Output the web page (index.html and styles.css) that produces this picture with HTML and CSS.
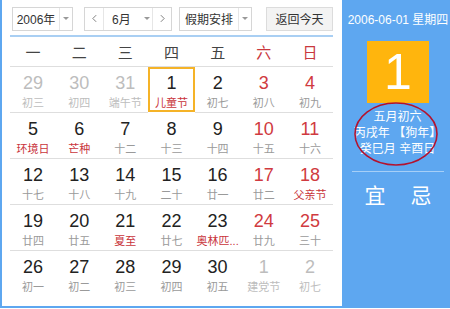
FILE: index.html
```html
<!DOCTYPE html>
<html lang="zh-CN">
<head>
    <meta charset="UTF-8">
    <title>万年历</title>
    <link rel="stylesheet" href="styles.css">
</head>
<body>
    <div class="calendar">
        <div class="main">
            <div class="toolbar">
                <div class="select year">
                    <span class="value">2006年</span>
                    <span class="drop"><i class="caret"></i></span>
                </div>
                <div class="select month">
                    <span class="nav">
                        <svg viewBox="0 0 6 10"><path d="M5 1 1 5l4 4"/></svg>
                    </span>
                    <span class="value">6月<i class="caret"></i></span>
                    <span class="nav">
                        <svg viewBox="0 0 6 10"><path d="M1 1l4 4-4 4"/></svg>
                    </span>
                </div>
                <div class="select holiday">
                    <span class="value">假期安排</span>
                    <span class="drop"><i class="caret"></i></span>
                </div>
                <button class="today-btn">返回今天</button>
            </div>

            <div class="weekdays">
                <span>一</span><span>二</span><span>三</span><span>四</span><span>五</span>
                <span class="weekend">六</span><span class="weekend">日</span>
            </div>

            <div class="days">
                <!-- week 1 -->
                <div class="day other"><b>29</b><small>初三</small></div>
                <div class="day other"><b>30</b><small>初四</small></div>
                <div class="day other"><b>31</b><small>端午节</small></div>
                <div class="day selected"><b>1</b><small class="fest">儿童节</small></div>
                <div class="day"><b>2</b><small>初七</small></div>
                <div class="day weekend"><b>3</b><small>初八</small></div>
                <div class="day weekend"><b>4</b><small>初九</small></div>
                <!-- week 2 -->
                <div class="day"><b>5</b><small class="fest">环境日</small></div>
                <div class="day"><b>6</b><small class="fest">芒种</small></div>
                <div class="day"><b>7</b><small>十二</small></div>
                <div class="day"><b>8</b><small>十三</small></div>
                <div class="day"><b>9</b><small>十四</small></div>
                <div class="day weekend"><b>10</b><small>十五</small></div>
                <div class="day weekend"><b>11</b><small>十六</small></div>
                <!-- week 3 -->
                <div class="day"><b>12</b><small>十七</small></div>
                <div class="day"><b>13</b><small>十八</small></div>
                <div class="day"><b>14</b><small>十九</small></div>
                <div class="day"><b>15</b><small>二十</small></div>
                <div class="day"><b>16</b><small>廿一</small></div>
                <div class="day weekend"><b>17</b><small>廿二</small></div>
                <div class="day weekend"><b>18</b><small class="fest">父亲节</small></div>
                <!-- week 4 -->
                <div class="day"><b>19</b><small>廿四</small></div>
                <div class="day"><b>20</b><small>廿五</small></div>
                <div class="day"><b>21</b><small class="fest">夏至</small></div>
                <div class="day"><b>22</b><small>廿七</small></div>
                <div class="day"><b>23</b><small class="fest">奥林匹...</small></div>
                <div class="day weekend"><b>24</b><small>廿九</small></div>
                <div class="day weekend"><b>25</b><small>三十</small></div>
                <!-- week 5 -->
                <div class="day last"><b>26</b><small>初一</small></div>
                <div class="day last"><b>27</b><small>初二</small></div>
                <div class="day last"><b>28</b><small>初三</small></div>
                <div class="day last"><b>29</b><small>初四</small></div>
                <div class="day last"><b>30</b><small>初五</small></div>
                <div class="day last other"><b>1</b><small>建党节</small></div>
                <div class="day last other"><b>2</b><small>初七</small></div>
            </div>
        </div>

        <aside class="panel">
            <p class="date">2006-06-01 星期四</p>
            <div class="big-day">1</div>
            <div class="lunar">
                <p>五月初六</p>
                <p>丙戌年 【狗年】</p>
                <p>癸巳月 辛酉日</p>
                <svg class="mark" viewBox="0 0 86 66">
                    <ellipse cx="43" cy="33" rx="41" ry="31"/>
                </svg>
            </div>
            <div class="yiji">
                <span>宜</span>
                <span>忌</span>
            </div>
        </aside>
    </div>
</body>
</html>
```

FILE: styles.css
```css
* {
    margin: 0;
    padding: 0;
    box-sizing: border-box;
}

body {
    font-family: "Liberation Sans", "Noto Sans CJK SC", sans-serif;
    background: #fff;
    color: #333;
}

.calendar {
    display: flex;
    width: 450px;
    height: 308px;
    border-left: 2px solid #5ea7f0;
    border-bottom: 2px solid #5ea7f0;
}

.main {
    width: 340px;
    padding: 0 9px 0 8px;
}

/* toolbar */
.toolbar {
    display: flex;
    align-items: center;
    height: 37px;
    padding: 2px 0 0 2px;
    border-bottom: 2px solid #a9cff3;
    font-size: 12px;
    white-space: nowrap;
}

.select {
    display: flex;
    height: 24px;
    border: 1px solid #d6d6d6;
    background: #fff;
}

.select span {
    display: flex;
    align-items: center;
    justify-content: center;
}

.year { width: 61px; }
.year .value { width: 46px; }
.year .drop { flex: 1; border-left: 1px solid #e6e6e6; }

.month { width: 88px; margin-left: 11px; }
.month .nav { width: 19px; flex-shrink: 0; }
.month .nav:first-child { border-right: 1px solid #e6e6e6; }
.month .nav:last-child { border-left: 1px solid #e6e6e6; }
.month .value {
    flex: 1;
    justify-content: flex-start;
    gap: 13px;
    padding-left: 8px;
}

.nav svg {
    width: 5px;
    height: 9px;
    fill: none;
    stroke: #666;
    stroke-width: 1;
}

.holiday { width: 73px; margin-left: 7px; }
.holiday .value { width: 58px; }
.holiday .drop { flex: 1; border-left: 1px solid #e6e6e6; }

.caret {
    display: inline-block;
    border-left: 3px solid transparent;
    border-right: 3px solid transparent;
    border-top: 3px solid #999;
}

.today-btn {
    width: 67px;
    height: 24px;
    margin-left: 14px;
    border: 1px solid #dcdcdc;
    background: #f3f3f3;
    color: #333;
    font: inherit;
    font-size: 12px;
}

/* weekday header */
.weekdays {
    display: grid;
    grid-template-columns: repeat(7, 1fr);
    height: 30px;
    border-bottom: 1px solid #dedede;
    font-size: 15px;
    color: #444;
}

.weekdays span {
    display: flex;
    align-items: center;
    justify-content: center;
}

.weekdays .weekend { color: #c9383e; }

/* days */
.days {
    display: grid;
    grid-template-columns: repeat(7, 1fr);
}

.day {
    display: flex;
    flex-direction: column;
    align-items: center;
    height: 46px;
    padding-top: 5px;
    border-bottom: 1px solid #dedede;
}

.day.last { border-bottom: none; }

.day b {
    font-weight: normal;
    font-size: 18px;
    line-height: 22px;
    color: #222;
}

.day small {
    margin-top: 2px;
    font-size: 11px;
    line-height: 14px;
    color: #9a9a9a;
}

.day.weekend b { color: #d03a40; }
.day small.fest { color: #c9343b; }

.day.other b,
.day.other small { color: #bdbdbd; }

.day.selected {
    box-shadow: inset 0 0 0 2px #f5b328;
    height: 45px;
    margin-bottom: 1px;
    border-bottom: none;
}

/* right panel */
.panel {
    flex: 1;
    background: #5ea7f0;
    color: #fff;
    display: flex;
    flex-direction: column;
    align-items: center;
}

.date {
    margin-top: 12px;
    font-size: 12px;
    line-height: 16px;
    margin-left: 4px;
}

.big-day {
    width: 62px;
    height: 62px;
    margin: 13px 0 0 4px;
    background: #ffb50d;
    font-size: 50px;
    line-height: 62px;
    text-align: center;
}

.lunar {
    position: relative;
    align-self: stretch;
    margin-top: 6px;
    padding-left: 3px;
    text-align: center;
    font-size: 12px;
    line-height: 16px;
}

.mark {
    position: absolute;
    left: 11px;
    top: -8px;
    width: 86px;
    height: 66px;
    fill: none;
    stroke: #b4122e;
    stroke-width: 1.6;
}

.yiji {
    display: flex;
    justify-content: space-around;
    width: 92px;
    margin: 14px 0 0 4px;
    padding-top: 11px;
    border-top: 1px solid #a6cff7;
    font-size: 21px;
    line-height: 26px;
}
```
